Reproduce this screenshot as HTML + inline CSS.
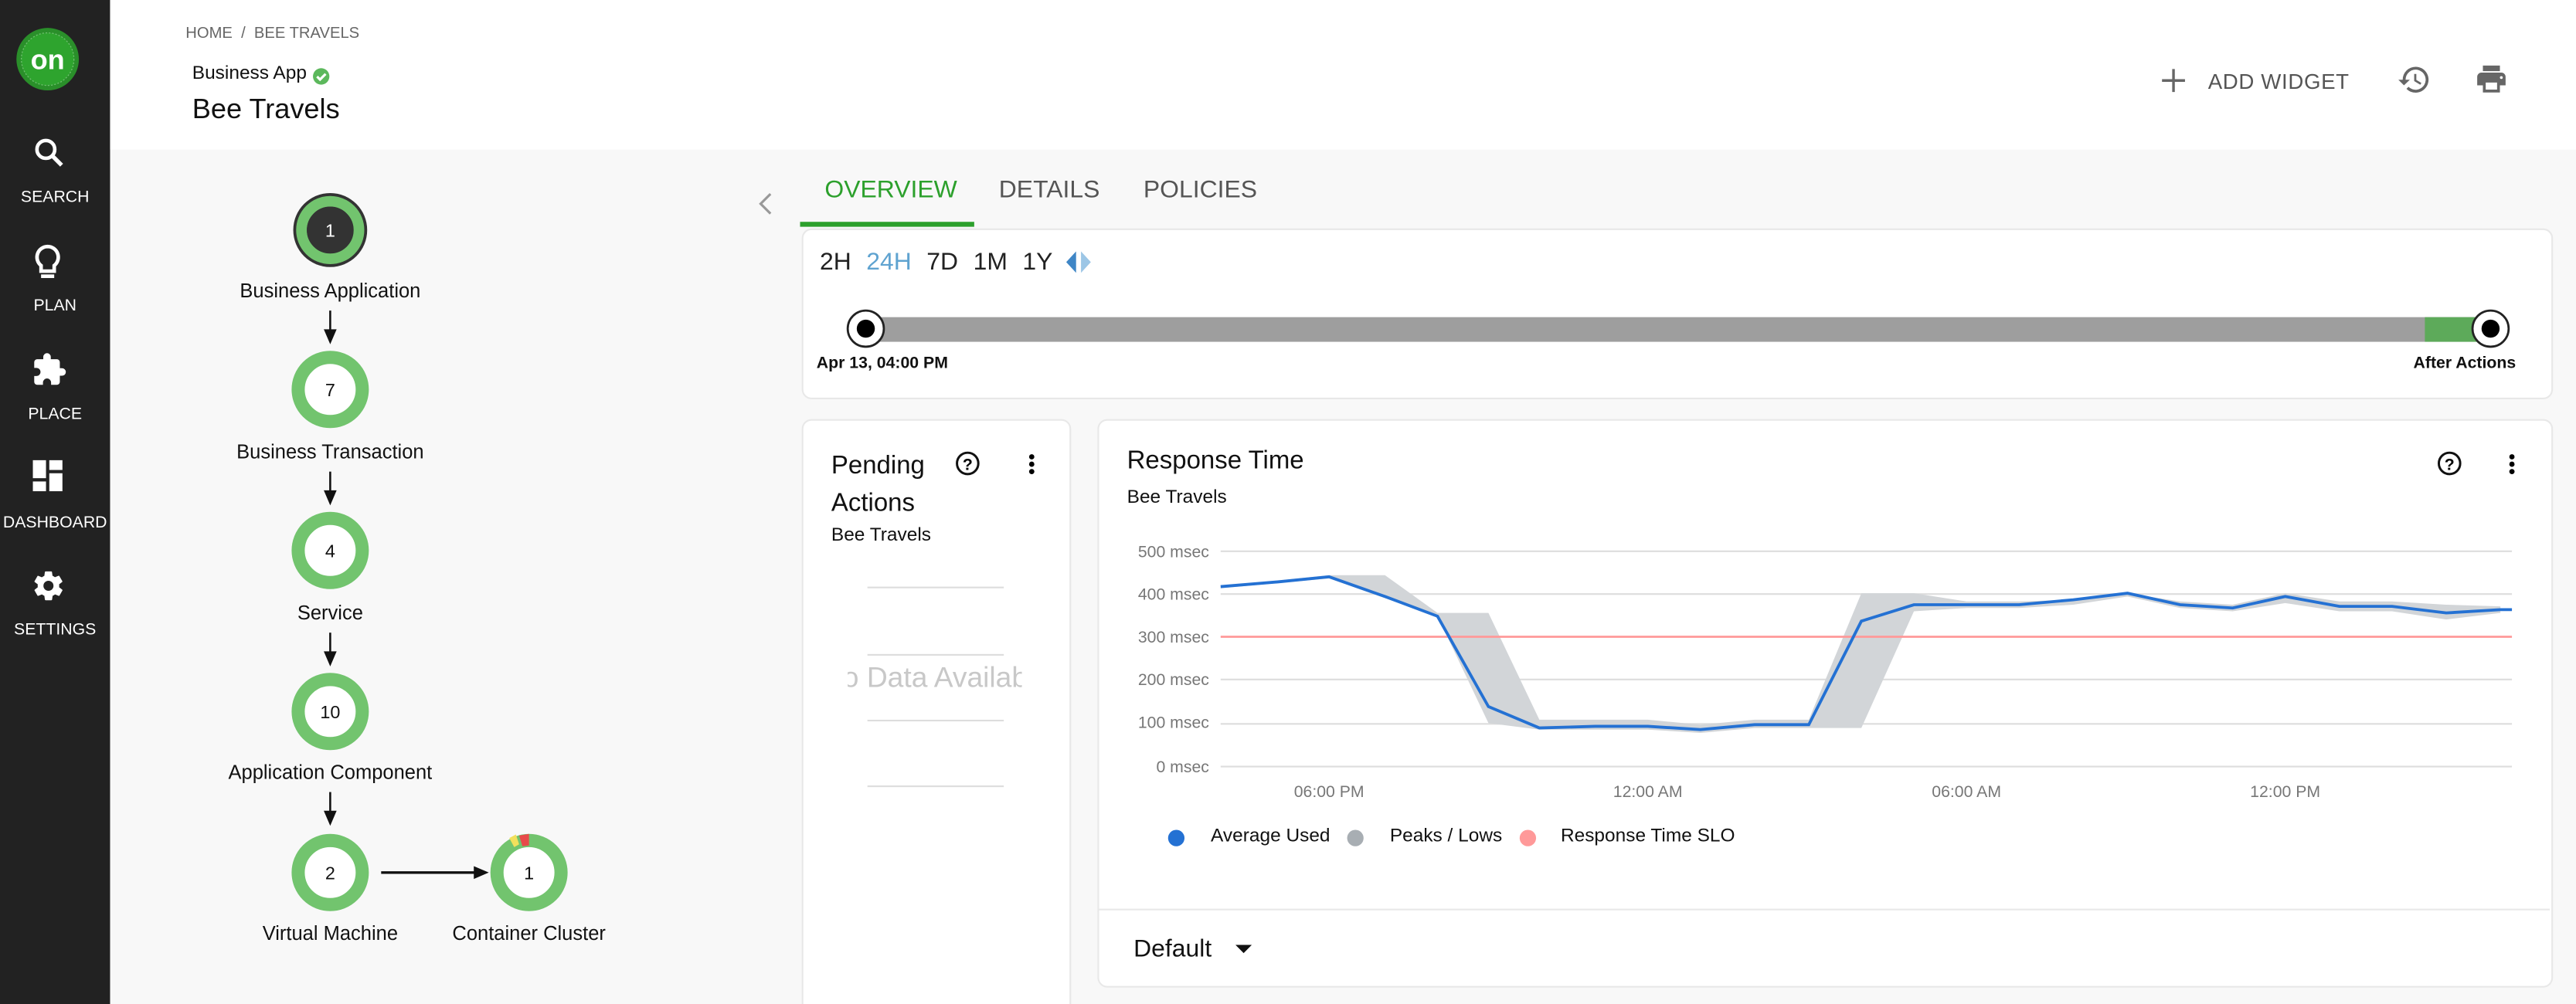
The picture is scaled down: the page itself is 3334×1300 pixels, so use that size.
<!DOCTYPE html>
<html><head><meta charset="utf-8"><style>
html,body{margin:0;padding:0;width:3334px;height:1300px;overflow:hidden;background:#f8f8f8}
#w{position:absolute;left:0;top:0;width:1568px;height:611px;overflow:hidden;transform:scale(2.12628,2.1277);transform-origin:0 0;font-family:"Liberation Sans",sans-serif;color:#222}
.a{position:absolute}
.side{left:0;top:0;width:67px;height:611px;background:#222}
.nav{position:absolute;left:0;width:67px;text-align:center;color:#fff;font-size:10px}
.card{position:absolute;background:#fff;border:1px solid #e8e8e8;border-radius:6px}
</style></head><body><div id="w">
<div class="a side"></div>
<svg class="a" style="left:9px;top:16px" width="40" height="40"><circle cx="20" cy="20" r="19" fill="#2a8f2a"/><circle cx="20" cy="20" r="16" fill="#2ea42e" stroke="#6fbf6f" stroke-width="0.6" stroke-dasharray="1 1"/><text x="20" y="26" text-anchor="middle" fill="#fff" font-family="Liberation Sans" font-weight="bold" font-size="17">on</text></svg>
<svg class="a" style="left:20px;top:83px" width="20" height="20" viewBox="0 0 24 24"><circle cx="9.5" cy="9.5" r="6.5" fill="none" stroke="#fff" stroke-width="2.6"/><path d="M14 14l7 7" stroke="#fff" stroke-width="3"/></svg>
<div class="nav" style="top:115px">SEARCH</div>
<svg class="a" style="left:20px;top:148px" width="18" height="24" viewBox="0 0 18 24"><path d="M9 2a6.5 6.5 0 0 0-4 11.6V17h8v-3.4A6.5 6.5 0 0 0 9 2z" fill="none" stroke="#fff" stroke-width="2.2"/><rect x="5" y="19" width="8" height="2.2" fill="#fff"/></svg>
<div class="nav" style="top:181px">PLAN</div>
<svg class="a" style="left:19px;top:214px" width="22" height="22" viewBox="0 0 24 24"><path d="M20.5 11H19V7a2 2 0 0 0-2-2h-4V3.5a2.5 2.5 0 0 0-5 0V5H4a2 2 0 0 0-2 2v3.8h1.5a2.7 2.7 0 0 1 0 5.4H2V20a2 2 0 0 0 2 2h3.8v-1.5a2.7 2.7 0 0 1 5.4 0V22H17a2 2 0 0 0 2-2v-4h1.5a2.5 2.5 0 0 0 0-5z" fill="#fff"/></svg>
<div class="nav" style="top:247px">PLACE</div>
<svg class="a" style="left:20px;top:280px" width="19" height="19" viewBox="0 0 19 19"><rect x="0" y="0" width="8" height="11" fill="#fff"/><rect x="10" y="0" width="8" height="6" fill="#fff"/><rect x="10" y="8" width="8" height="11" fill="#fff"/><rect x="0" y="13" width="8" height="6" fill="#fff"/></svg>
<div class="nav" style="top:313px">DASHBOARD</div>
<svg class="a" style="left:19px;top:346px" width="21" height="21" viewBox="0 0 24 24"><path fill="#fff" d="M19.4 13c.04-.3.06-.6.06-1s-.02-.7-.07-1l2.1-1.650a.5.5 0 0 0 .12-.64l-2-3.46a.5.5 0 0 0-.6-.22l-2.5 1a7.3 7.3 0 0 0-1.7-1l-.37-2.65A.5.5 0 0 0 14 2h-4a.5.5 0 0 0-.5.42l-.37 2.65c-.6.25-1.2.6-1.7 1l-2.5-1a.5.5 0 0 0-.6.22l-2 3.46a.5.5 0 0 0 .12.64L4.570 11c-.05.3-.07.7-.07 1s.02.7.07 1l-2.1 1.65a.5.5 0 0 0-.12.64l2 3.46c.12.22.4.3.6.22l2.5-1c.5.4 1.1.73 1.7 1l.37 2.65c.04.24.25.42.5.42h4c.25 0 .46-.18.5-.42l.37-2.65c.6-.25 1.2-.6 1.7-1l2.5 1c.22.08.48 0 .6-.22l2-3.46a.5.5 0 0 0-.12-.64zM12 15.5a3.5 3.5 0 1 1 0-7 3.5 3.5 0 0 1 0 7z"/></svg>
<div class="nav" style="top:378px">SETTINGS</div>

<div class="a" style="left:67px;top:0;width:1501px;height:91px;background:#fff"></div>
<div class="a" style="left:113px;top:15px;font-size:9.5px;color:#666">HOME &nbsp;/ &nbsp;BEE TRAVELS</div>
<div class="a" style="left:117px;top:39px;font-size:11.5px;color:#111">Business App</div>
<svg class="a" style="left:190px;top:41px" width="11" height="11"><circle cx="5.5" cy="5.5" r="5" fill="#5cb85c"/><path d="M3 5.6l1.8 1.8L8.2 4" stroke="#fff" stroke-width="1.5" fill="none"/></svg>
<div class="a" style="left:117px;top:57px;font-size:17px;color:#111">Bee Travels</div>
<svg class="a" style="left:1315px;top:41px" width="16" height="16"><path d="M8 1v14M1 8h14" stroke="#666" stroke-width="1.6"/></svg>
<div class="a" style="left:1344px;top:42px;font-size:13px;color:#555;letter-spacing:0.3px">ADD WIDGET</div>
<svg class="a" style="left:1459px;top:38px" width="21" height="21" viewBox="0 0 24 24"><path fill="#666" d="M13 3a9 9 0 0 0-9 9H1l3.9 3.9L9 12H6a7 7 0 1 1 2.05 4.95l-1.42 1.42A9 9 0 1 0 13 3zm-1 5v5l4.25 2.52.77-1.28-3.52-2.09V8z"/></svg>
<svg class="a" style="left:1506px;top:39px" width="21" height="19" viewBox="0 0 24 22"><path fill="#666" d="M19 6H5a3 3 0 0 0-3 3v6h4v5h12v-5h4V9a3 3 0 0 0-3-3zm-3 12H8v-5h8zM18 1H6v4h12z"/><circle cx="19" cy="9.5" r="1" fill="#fff"/></svg>

<svg class="a" style="left:100px;top:100px" width="360" height="511" viewBox="100 100 360 511">
<g font-family="Liberation Sans" font-size="12" text-anchor="middle" fill="#111">
<circle cx="201" cy="140" r="22.5" fill="#333"/>
<circle cx="201" cy="140" r="17.5" fill="none" stroke="#72c46e" stroke-width="6.5"/>
<circle cx="201" cy="140" r="14.2" fill="#333"/>
<text x="201" y="144" fill="#fff" font-size="11">1</text>
<circle cx="201" cy="237" r="19.5" fill="#fff" stroke="#72c46e" stroke-width="8"/><text x="201" y="241" font-size="11">7</text>
<circle cx="201" cy="335" r="19.5" fill="#fff" stroke="#72c46e" stroke-width="8"/><text x="201" y="339" font-size="11">4</text>
<circle cx="201" cy="433" r="19.5" fill="#fff" stroke="#72c46e" stroke-width="8"/><text x="201" y="437" font-size="11">10</text>
<circle cx="201" cy="531" r="19.5" fill="#fff" stroke="#72c46e" stroke-width="8"/><text x="201" y="535" font-size="11">2</text>
<circle cx="322" cy="531" r="19.5" fill="#fff" stroke="#72c46e" stroke-width="8"/>
<path d="M316 508.5l2 6.5 4-0.5v-7z" fill="#e84a4a"/><path d="M310 510l3 5.5 3-1.7-2-6z" fill="#f2e05c"/>
<text x="322" y="535" font-size="11">1</text>
<text x="201" y="181">Business Application</text>
<text x="201" y="279">Business Transaction</text>
<text x="201" y="377">Service</text>
<text x="201" y="474">Application Component</text>
<text x="201" y="572">Virtual Machine</text>
<text x="322" y="572">Container Cluster</text>
</g>
<g stroke="#111" stroke-width="1.2" fill="#111">
<path d="M201 189v13"/><path d="M198 201l3 7 3-7z"/>
<path d="M201 287v13"/><path d="M198 299l3 7 3-7z"/>
<path d="M201 385v13"/><path d="M198 397l3 7 3-7z"/>
<path d="M201 482v13"/><path d="M198 494l3 7 3-7z"/>
<path d="M232 531h58" stroke-width="1.6"/><path d="M289 528l7 3-7 3z"/>
</g>
</svg>
<svg class="a" style="left:461px;top:117px" width="10" height="14"><path d="M8 1L2 7l6 6" stroke="#999" stroke-width="1.5" fill="none"/></svg>

<div class="a" style="left:502px;top:107px;font-size:15px;color:#2ca02c">OVERVIEW</div>
<div class="a" style="left:608px;top:107px;font-size:15px;color:#555">DETAILS</div>
<div class="a" style="left:696px;top:107px;font-size:15px;color:#555">POLICIES</div>
<div class="a" style="left:487px;top:135px;width:106px;height:3px;background:#2ca02c"></div>

<div class="card" style="left:488px;top:139px;width:1064px;height:102px"></div>
<div class="a" style="left:499px;top:151px;font-size:15px;color:#222;word-spacing:5px">2H <span style="color:#5fa3d0">24H</span> 7D 1M 1Y</div>
<svg class="a" style="left:647px;top:152px" width="20" height="15"><path d="M8 1L2 7.5 8 14z" fill="#3f86c6"/><path d="M11 1l6 6.5-6 6.5z" fill="#9cc6e6"/></svg>
<div class="a" style="left:527px;top:193px;width:990px;height:15px;background:#9e9e9e"></div>
<div class="a" style="left:1476px;top:193px;width:40px;height:15px;background:#5daa5a"></div>
<svg class="a" style="left:514px;top:187px" width="26" height="26"><circle cx="13" cy="13" r="11" fill="#fff" stroke="#222" stroke-width="1.3"/><circle cx="13" cy="13" r="5.5" fill="#000"/></svg>
<svg class="a" style="left:1503px;top:187px" width="26" height="26"><circle cx="13" cy="13" r="11" fill="#fff" stroke="#222" stroke-width="1.3"/><circle cx="13" cy="13" r="5.5" fill="#000"/></svg>
<div class="a" style="left:497px;top:216px;font-size:10px;font-weight:bold;color:#111">Apr 13, 04:00 PM</div>
<div class="a" style="left:1469px;top:216px;font-size:10px;font-weight:bold;color:#111">After Actions</div>

<div class="card" style="left:488px;top:255px;width:162px;height:370px"></div>
<div class="a" style="left:506px;top:272px;font-size:15.5px;line-height:23px;color:#111">Pending<br>Actions</div>
<svg class="a" style="left:581px;top:274px" width="16" height="16"><circle cx="8" cy="8" r="6.5" fill="none" stroke="#111" stroke-width="1.4"/><text x="8" y="12" text-anchor="middle" font-family="Liberation Sans" font-weight="bold" font-size="10">?</text></svg>
<svg class="a" style="left:625px;top:275px" width="6" height="15"><circle cx="3" cy="3" r="1.6"/><circle cx="3" cy="7.5" r="1.6"/><circle cx="3" cy="12" r="1.6"/></svg>
<div class="a" style="left:506px;top:320px;font-size:11.5px;color:#111">Bee Travels</div>
<div class="a" style="left:528px;top:357px;width:83px;height:1px;background:#ddd"></div>
<div class="a" style="left:528px;top:398px;width:83px;height:1px;background:#ddd"></div>
<div class="a" style="left:528px;top:438px;width:83px;height:1px;background:#ddd"></div>
<div class="a" style="left:528px;top:478px;width:83px;height:1px;background:#ddd"></div>
<div class="a" style="left:516px;top:402px;width:106px;overflow:hidden;white-space:nowrap;font-size:17.5px;color:#c8c8c8"><span style="margin-left:-3px">o Data Available</span></div>

<div class="card" style="left:668px;top:255px;width:884px;height:344px"></div>
<div class="a" style="left:669px;top:553px;width:883px;height:1px;background:#e8e8e8"></div>
<div class="a" style="left:686px;top:272px;font-size:15.5px;color:#111">Response Time</div>
<div class="a" style="left:686px;top:297px;font-size:11.5px;color:#111">Bee Travels</div>
<svg class="a" style="left:1483px;top:274px" width="16" height="16"><circle cx="8" cy="8" r="6.5" fill="none" stroke="#111" stroke-width="1.4"/><text x="8" y="12" text-anchor="middle" font-family="Liberation Sans" font-weight="bold" font-size="10">?</text></svg>
<svg class="a" style="left:1526px;top:275px" width="6" height="15"><circle cx="3" cy="3" r="1.6"/><circle cx="3" cy="7.5" r="1.6"/><circle cx="3" cy="12" r="1.6"/></svg>
<div class="a" style="left:690px;top:569px;font-size:15px;color:#111">Default</div>
<svg class="a" style="left:752px;top:575px" width="10" height="6"><path d="M0 0h10L5 5z" fill="#111"/></svg>

<svg class="a" style="left:670px;top:320px" width="880" height="220" viewBox="670 320 880 220">
<g font-family="Liberation Sans" font-size="10" fill="#777">
<g text-anchor="end"><text x="736" y="339">500 msec</text><text x="736" y="365">400 msec</text><text x="736" y="391">300 msec</text><text x="736" y="417">200 msec</text><text x="736" y="443">100 msec</text><text x="736" y="470">0 msec</text></g>
<g text-anchor="middle"><text x="809" y="485">06:00 PM</text><text x="1003" y="485">12:00 AM</text><text x="1197" y="485">06:00 AM</text><text x="1391" y="485">12:00 PM</text></g>
</g>
<g stroke="#ddd" stroke-width="1"><path d="M743 335.5h786M743 361.5h786M743 413.5h786M743 440.5h786M743 466.5h786"/></g>
<polygon fill="#d2d5d8" points="743,357 809,350 843,350 875,373 906,373 937,438 971,438 1003,438 1035,441 1068,438 1101,438 1133,361 1165,361 1197,366 1229,366 1262,365 1295,361 1327,366 1359,368 1391,361 1424,366 1456,366 1489,368 1522,369 1522,373 1489,377 1456,372 1424,372 1391,367 1359,372 1327,370 1295,363 1262,368 1229,370 1197,370 1165,372 1133,443 1101,443 1068,443 1035,446 1003,444 971,444 937,444 906,440 875,375 843,364 809,352 743,358"/>
<path d="M743 387.5h786" stroke="#f99" stroke-width="1.3"/>
<polyline fill="none" stroke="#2471d3" stroke-width="1.8" points="743,357 779,354 809,351 843,363 875,375 906,430 937,443 971,442 1003,442 1035,444 1068,441 1101,441 1133,378 1165,368 1197,368 1229,368 1262,365 1295,361 1327,368 1359,370 1391,363 1424,369 1456,369 1489,373 1522,371 1529,371"/>
<circle cx="716" cy="510" r="5" fill="#2471d3"/><circle cx="825" cy="510" r="5" fill="#a8aeb3"/><circle cx="930" cy="510" r="5" fill="#f99"/>
<g font-family="Liberation Sans" font-size="11.5" fill="#111"><text x="737" y="512">Average Used</text><text x="846" y="512">Peaks / Lows</text><text x="950" y="512">Response Time SLO</text></g>
</svg>
</div></body></html>
